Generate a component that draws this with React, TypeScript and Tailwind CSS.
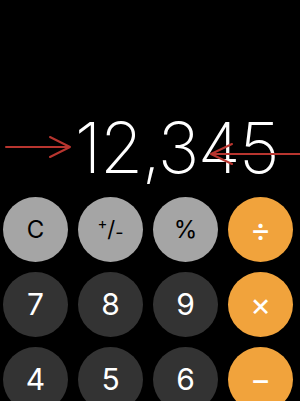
import React from "react";

type Btn = { label: React.ReactNode; kind: "light" | "dark" | "orange" };

const rows: Btn[][] = [
  [
    { label: "C", kind: "light" },
    {
      label: (
        <span className="flex items-center">
          <span className="text-[15px] -translate-y-[5px]">+</span>
          <span className="text-[22px]">/</span>
          <span className="text-[18px] translate-y-[3px]">-</span>
        </span>
      ),
      kind: "light",
    },
    { label: "%", kind: "light" },
    { label: "÷", kind: "orange" },
  ],
  [
    { label: "7", kind: "dark" },
    { label: "8", kind: "dark" },
    { label: "9", kind: "dark" },
    { label: "×", kind: "orange" },
  ],
  [
    { label: "4", kind: "dark" },
    { label: "5", kind: "dark" },
    { label: "6", kind: "dark" },
    { label: "−", kind: "orange" },
  ],
];

function Key({ b }: { b: Btn }) {
  const cls =
    b.kind === "light"
      ? "bg-[#a5a5a5] text-black text-[24px]"
      : b.kind === "dark"
      ? "bg-[#333333] text-white text-[30px]"
      : "bg-[#f1a33c] text-white text-[32px]";
  return (
    <div
      className={`w-[65px] h-[65px] rounded-full flex items-center justify-center shrink-0 ${cls}`}
    >
      {b.label}
    </div>
  );
}

export default function App() {
  return (
    <div
      className="relative w-[300px] h-[401px] bg-black overflow-hidden"
      style={{ fontFamily: "Inter, 'Noto Sans', sans-serif" }}
    >
      <div className="h-[197px] flex items-end justify-end pr-[22px] pb-[14px]">
        <span className="text-white text-[70px] leading-none font-extralight tracking-[-1.5px]">
          12,345
        </span>
      </div>
      <div className="flex flex-col gap-[10px] pl-[3px]">
        {rows.map((r, i) => (
          <div key={i} className="flex gap-[10px]">
            {r.map((b, j) => (
              <Key key={j} b={b} />
            ))}
          </div>
        ))}
      </div>
      <svg
        className="absolute left-0 top-0 pointer-events-none"
        width="300"
        height="401"
        viewBox="0 0 300 401"
      >
        <g stroke="#b8352f" strokeWidth="2" fill="none" strokeLinecap="round" strokeLinejoin="round">
          <path d="M6 147 H70 M50 137 L70 147 L50 157" />
          <path d="M300 154 H211 M232 144 L211 154 L232 164" />
        </g>
      </svg>
    </div>
  );
}
